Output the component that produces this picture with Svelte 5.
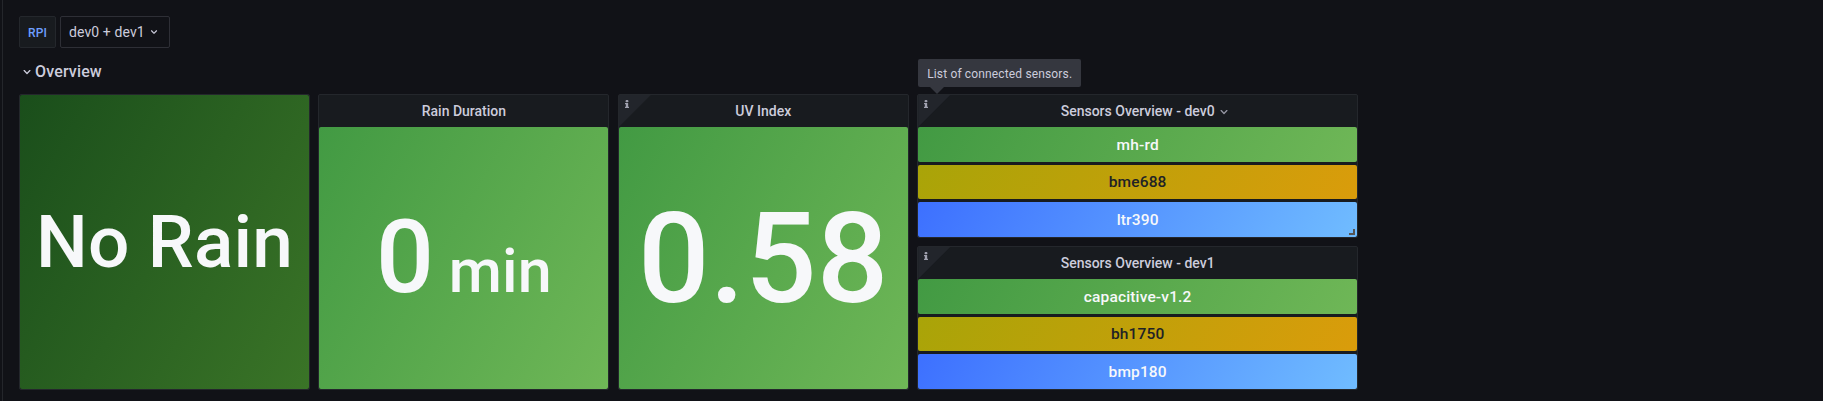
<script>
  const stats = [
    { title: '', value: 'No Rain', unit: '', tone: 'forest', size: 'word', info: false },
    { title: 'Rain Duration', value: '0', unit: 'min', tone: 'green', size: 'duration', info: false },
    { title: 'UV Index', value: '0.58', unit: '', tone: 'green', size: 'number', info: true }
  ];
  const devices = [
    {
      name: 'dev0',
      active: true,
      sensors: [
        { name: 'mh-rd', tone: 'green' },
        { name: 'bme688', tone: 'amber' },
        { name: 'ltr390', tone: 'blue' }
      ]
    },
    {
      name: 'dev1',
      active: false,
      sensors: [
        { name: 'capacitive-v1.2', tone: 'green' },
        { name: 'bh1750', tone: 'amber' },
        { name: 'bmp180', tone: 'blue' }
      ]
    }
  ];
</script>

{#snippet chevron(size)}
  <svg class="chevron" width={size} height={size} viewBox="0 0 24 24" aria-hidden="true">
    <path d="M17 9.17a1 1 0 0 0-1.41 0L12 12.71 8.46 9.17a1 1 0 0 0-1.41 0 1 1 0 0 0 0 1.42l4.24 4.24a1 1 0 0 0 1.42 0L17 10.59a1 1 0 0 0 0-1.42Z" />
  </svg>
{/snippet}

{#snippet infoCorner()}
  <div class="corner">
    <svg width="4" height="8" viewBox="0 0 192 512" preserveAspectRatio="none" aria-hidden="true">
      <path d="M20 424.229h20V279.771H20c-11.046 0-20-8.954-20-20V212c0-11.046 8.954-20 20-20h112c11.046 0 20 8.954 20 20v212.229h20c11.046 0 20 8.954 20 20V492c0 11.046-8.954 20-20 20H20c-11.046 0-20-8.954-20-20v-47.771c0-11.046 8.954-20 20-20zM96 0C56.235 0 24 32.235 24 72s32.235 72 72 72 72-32.235 72-72S135.764 0 96 0z" />
    </svg>
  </div>
{/snippet}

<main class="dashboard">
  <div class="variables">
    <span class="label">RPI</span>
    <button class="select">dev0 + dev1 {@render chevron(14)}</button>
  </div>
  <div class="row-title">{@render chevron(16)}<span>Overview</span></div>
  <div class="panels">
    {#each stats as stat}
      <section class="panel">
        {#if stat.info}{@render infoCorner()}{/if}
        {#if stat.title}<header>{stat.title}</header>{/if}
        <div class="stat {stat.tone} {stat.size}">
          <span class="value">{stat.value}</span>{#if stat.unit}<span class="unit">{stat.unit}</span>{/if}
        </div>
      </section>
    {/each}
    <div class="devices">
      {#each devices as device}
        <section class="panel">
          {@render infoCorner()}
          {#if device.active}
            <div class="tooltip">List of connected sensors.</div>
          {/if}
          <header>
            <span class="name">Sensors Overview - {device.name}{#if device.active}<span class="menu">{@render chevron(16)}</span>{/if}</span>
          </header>
          <div class="sensors">
            {#each device.sensors as sensor}
              <div class="sensor {sensor.tone}">{sensor.name}</div>
            {/each}
          </div>
          {#if device.active}<span class="resize"></span>{/if}
        </section>
      {/each}
    </div>
  </div>
</main>

<style>
  :global(body) {
    background: #111217;
  }
  .dashboard {
    box-sizing: border-box;
    width: 1821px;
    height: 401px;
    margin-left: 2px;
    padding: 16px 0 0 16px;
    border-left: 1px solid #24262b;
    background: #111217;
    color: #ccccdc;
    font-family: Roboto, sans-serif;
    font-size: 14px;
    line-height: 22px;
    letter-spacing: 0.15px;
    overflow: hidden;
  }
  .chevron {
    fill: currentColor;
    flex: none;
  }
  .variables {
    display: flex;
    gap: 4px;
    height: 32px;
  }
  .label,
  .select {
    box-sizing: border-box;
    display: flex;
    align-items: center;
    height: 32px;
    border: 1px solid #24272c;
    border-radius: 2px;
  }
  .label {
    width: 37px;
    padding: 2px 8px 0;
    background: #181b1f;
    color: #6e9fff;
    font-size: 12px;
    font-weight: 500;
  }
  .select {
    width: 110px;
    padding: 0 8px;
    gap: 2px;
    border-color: #2e2f36;
    background: #111217;
    color: inherit;
    font: inherit;
    letter-spacing: 0.1px;
    white-space: nowrap;
  }
  .row-title {
    display: flex;
    align-items: center;
    height: 24px;
    margin-top: 12px;
    font-size: 16px;
    font-weight: 500;
  }
  .panels {
    display: grid;
    grid-template-columns: 291px 291px 291px 441px;
    column-gap: 8.4px;
    height: 296px;
    margin-top: 10px;
  }
  .devices {
    display: grid;
    grid-template-rows: 144px 144px;
    row-gap: 8px;
  }
  .panel {
    position: relative;
    box-sizing: border-box;
    display: flex;
    flex-direction: column;
    min-width: 0;
    border: 1px solid #24272c;
    border-radius: 2px;
    background: #181b1f;
  }
  header {
    display: flex;
    justify-content: center;
    align-items: center;
    height: 32px;
    flex: none;
    font-weight: 500;
    letter-spacing: 0;
  }
  .name {
    position: relative;
  }
  .menu {
    position: absolute;
    left: 100%;
    top: 4px;
    margin-left: 1px;
    display: flex;
    color: #9596a3;
  }
  .corner {
    position: absolute;
    left: 0;
    top: 0;
    width: 32px;
    height: 32px;
    background: #22252b;
    clip-path: polygon(0 0, 100% 0, 0 100%);
  }
  .corner svg {
    position: absolute;
    left: 6px;
    top: 5px;
    fill: #a0a1af;
  }
  .tooltip {
    position: absolute;
    left: 0;
    top: -36px;
    box-sizing: border-box;
    width: 163px;
    height: 28px;
    padding: 5px 9px;
    border-radius: 2px;
    background: #35373f;
    font-size: 12px;
    line-height: 21px;
    white-space: nowrap;
    z-index: 1;
  }
  .tooltip::after {
    content: '';
    position: absolute;
    left: 12px;
    top: 28px;
    border: 7px solid transparent;
    border-top-color: #35373f;
    border-bottom: 0;
  }
  .stat {
    flex: 1;
    display: flex;
    align-items: center;
    justify-content: center;
    border-radius: 2px;
    color: #f7f8fa;
    font-weight: 500;
    line-height: 1.2;
    white-space: nowrap;
  }
  .word {
    padding-top: 2px;
    font-size: 73px;
  }
  .duration {
    align-items: baseline;
    font-size: 102px;
    line-height: 261px;
  }
  .number {
    padding-top: 3px;
    font-size: 126px;
  }
  .unit {
    margin-left: 14.7px;
    font-size: 61px;
    line-height: 1;
  }
  .sensors {
    flex: 1;
    display: grid;
    grid-template-rows: repeat(3, 1fr);
    row-gap: 3px;
  }
  .sensor {
    display: flex;
    align-items: center;
    justify-content: center;
    padding-top: 0.6px;
    border-radius: 2px;
    color: #f7f8fa;
    font-size: 15.5px;
    font-weight: 500;
  }
  .green {
    background: linear-gradient(120deg, #429a43, #6fb757);
  }
  .forest {
    background: linear-gradient(120deg, #1a4e1b, #3a7427);
  }
  .amber {
    background: linear-gradient(120deg, #a9a408, #da9c0b);
    color: #202226;
  }
  .blue {
    background: linear-gradient(120deg, #3d70ff, #70bcff);
  }
  .resize {
    position: absolute;
    right: 2px;
    bottom: 2px;
    width: 4px;
    height: 4px;
    border: solid #555;
    border-width: 0 2px 2px 0;
  }
</style>
